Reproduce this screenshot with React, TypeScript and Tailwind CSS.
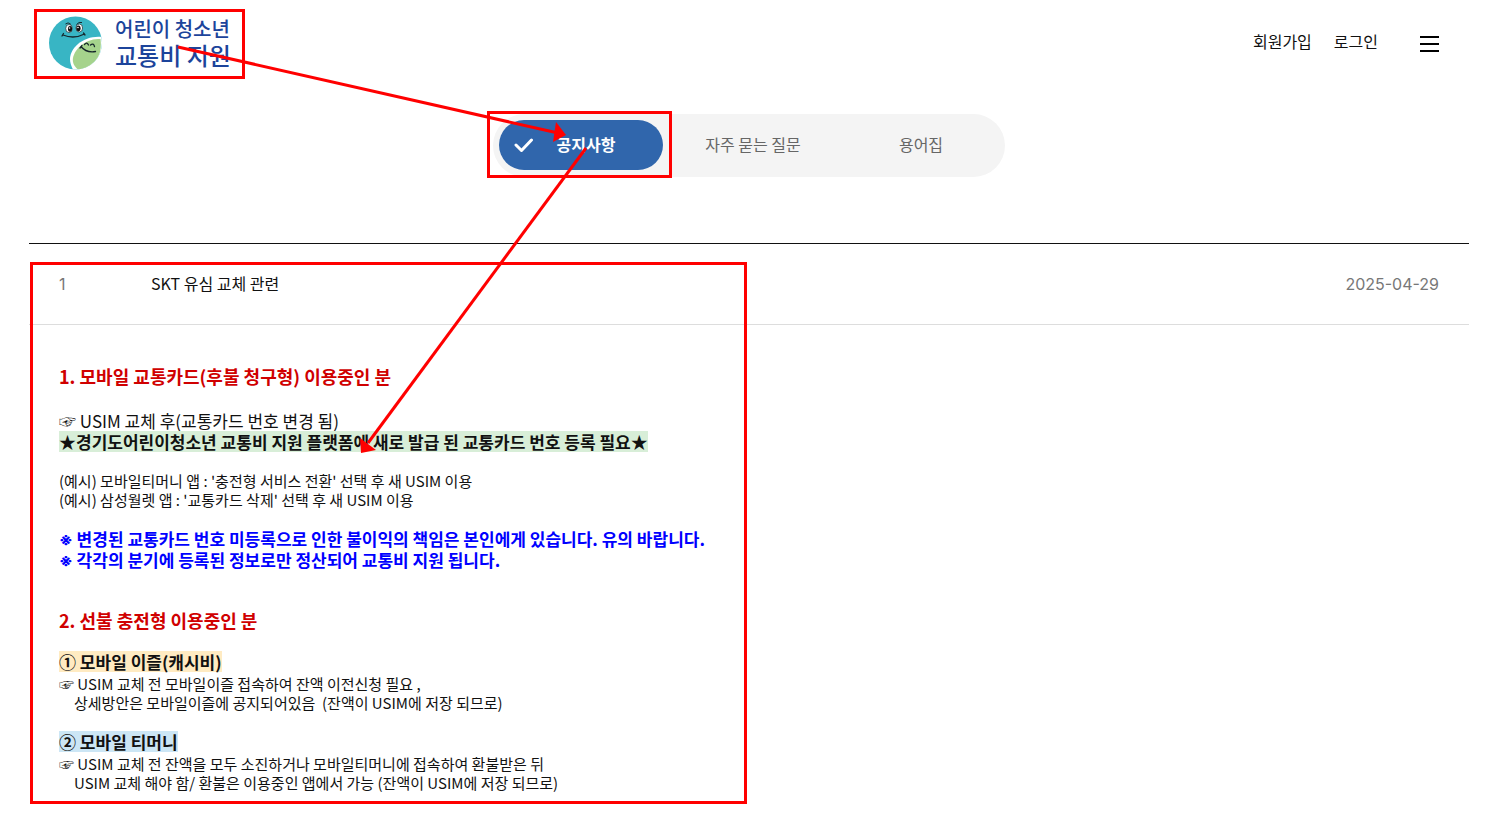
function Logo() {
  return (
    <a href="#home" className="relative flex h-[70px] w-[211px] items-center pl-[14px]">
      <svg viewBox="0 0 54 54" className="mb-[3px] h-[54px] w-[54px] shrink-0" fill="none" aria-hidden="true">
        <defs>
          <clipPath id="face">
            <circle cx="27.500" cy="27" r="26.500" />
          </clipPath>
        </defs>
        <circle cx="27.500" cy="27" r="26.500" fill="#38b5c4" />
        <g clipPath="url(#face)">
          <path d="M55 21C37 18.500 22 31 22 43C22 48 24 52 27 57L58 57L58 22Z" fill="#fff" />
          <path d="M52.500 23C38 21.500 24.800 34 24.800 44C24.800 48 27.500 52 31 54C44 53 55 42 52.500 23Z" fill="#a5d38c" />
        </g>
        <path d="M17.500 8Q20 5.500 23 8.500M28.500 8.500Q31 5.500 34 6.500" stroke="#16262b" strokeWidth="1" />
        <ellipse cx="21" cy="12.500" rx="3.300" ry="4" fill="#fff" stroke="#16262b" strokeWidth=".7" />
        <ellipse cx="31.300" cy="12" rx="3.300" ry="4" fill="#fff" stroke="#16262b" strokeWidth=".7" />
        <ellipse cx="22" cy="12.800" rx="2.100" ry="2.900" fill="#111" />
        <ellipse cx="30.500" cy="12.300" rx="2.100" ry="2.900" fill="#111" />
        <circle cx="21.500" cy="12" r=".8" fill="#fff" />
        <circle cx="30" cy="11.500" r=".8" fill="#fff" />
        <path d="M15 19Q26 23.500 36.500 18M14 20L15.500 17.500M35.500 17L37 19" stroke="#16262b" strokeWidth="1.300" strokeLinecap="round" />
        <path d="M36.500 28.500Q39 25.500 40.500 29M42.500 29Q45.500 26.500 46.500 30.500M33 30.500Q38 37 47.500 35.500M32 32L34 29.500" stroke="#16262b" strokeWidth="1.300" strokeLinecap="round" />
      </svg>
      <span className="mb-[4px] ml-[13px] flex flex-col whitespace-nowrap text-[#1c449b]">
        <span className="text-[20px] leading-[26px] font-medium">어린이 청소년</span>
        <span className="text-[24px] leading-[26px] font-medium">교통비 지원</span>
      </span>
      <span className="pointer-events-none absolute inset-0 border-3 border-[#f00]" />
    </a>
  );
}

function Tabs() {
  return (
    <nav className="mx-auto flex h-[63px] w-[512px] items-start rounded-full bg-[#f4f4f4] pt-[6px] pl-[6px] text-[16px] text-[#666]">
      <div className="relative">
        <button className="relative flex h-[50px] w-[164px] items-center justify-center rounded-full bg-[#3066ac] pb-[2px] pl-[10px] font-bold text-white">
          <svg viewBox="0 0 20 16" className="absolute top-[17px] left-[15px] h-4 w-5" fill="none" aria-hidden="true">
            <path d="M2 8L7.500 13.500L17.500 3" stroke="#fff" strokeWidth="3" strokeLinecap="round" strokeLinejoin="round" />
          </svg>
          공지사항
        </button>
        <span className="pointer-events-none absolute -top-[9px] -left-[12px] h-[67px] w-[185px] border-3 border-[#f00]" />
      </div>
      <button className="ml-2 h-[50px] w-[164px] pb-[2px] text-center">자주 묻는 질문</button>
      <button className="ml-1 h-[50px] w-[164px] pb-[2px] text-center">용어집</button>
    </nav>
  );
}

function NoticeBody() {
  return (
    <div className="pt-[39px] pl-[30px] text-[15px] leading-[19px] whitespace-nowrap text-[#111]">
      <h2 className="text-[18px] leading-6 font-bold text-[#d00000]">1. 모바일 교통카드(후불 청구형) 이용중인 분</h2>
      <div className="mt-[22px] text-[17px] leading-[21px]">
        <p>☞ USIM 교체 후(교통카드 번호 변경 됨)</p>
        <p className="flex font-bold">
          <mark className="bg-[#d8eed8] text-inherit">★경기도어린이청소년 교통비 지원 플랫폼에 새로 발급 된 교통카드 번호 등록 필요★</mark>
        </p>
      </div>
      <div className="mt-[19px]">
        <p>(예시) 모바일티머니 앱 : '충전형 서비스 전환' 선택 후 새 USIM 이용</p>
        <p>(예시) 삼성월렛 앱 : '교통카드 삭제' 선택 후 새 USIM 이용</p>
      </div>
      <div className="mt-[19px] text-[17px] leading-[21px] font-bold text-[#00f]">
        <p>
          <span className="font-['Inter',sans-serif] leading-none">※</span> 변경된 교통카드 번호 미등록으로 인한 불이익의 책임은 본인에게 있습니다. 유의 바랍니다.
        </p>
        <p>
          <span className="font-['Inter',sans-serif] leading-none">※</span> 각각의 분기에 등록된 정보로만 정산되어 교통비 지원 됩니다.
        </p>
      </div>
      <h2 className="mt-[38px] text-[18px] leading-6 font-bold text-[#d00000]">2. 선불 충전형 이용중인 분</h2>
      <h3 className="mt-[19px] flex text-[17px] leading-[21px] font-bold">
        <mark className="bg-[#ffebc2] text-inherit">① 모바일 이즐(캐시비)</mark>
      </h3>
      <div className="mt-[2px]">
        <p>☞ USIM 교체 전 모바일이즐 접속하여 잔액 이전신청 필요 ,</p>
        <p className="pl-[15px]">상세방안은 모바일이즐에 공지되어있음&nbsp; (잔액이 USIM에 저장 되므로)</p>
      </div>
      <h3 className="mt-[19px] flex text-[17px] leading-[21px] font-bold">
        <mark className="bg-[#cce6f5] text-inherit">② 모바일 티머니</mark>
      </h3>
      <div className="mt-[2px]">
        <p>☞ USIM 교체 전 잔액을 모두 소진하거나 모바일티머니에 접속하여 환불받은 뒤</p>
        <p className="pl-[15px]">USIM 교체 해야 함/ 환불은 이용중인 앱에서 가능 (잔액이 USIM에 저장 되므로)</p>
      </div>
    </div>
  );
}

function Arrows() {
  return (
    <svg className="pointer-events-none absolute top-0 left-0 h-[818px] w-[1491px]" viewBox="0 0 1491 818" aria-hidden="true">
      <g stroke="#f00" strokeWidth="3" fill="#f00">
        <path d="M178 47L558 133" />
        <path d="M586 148L368 443" />
      </g>
      <path d="M556 122L566 135L553 142Z" fill="#f00" />
      <path d="M360 438L361 453L376 450Z" fill="#f00" />
    </svg>
  );
}

export default function App() {
  return (
    <div className="relative min-h-screen overflow-x-hidden bg-white pb-[14px] font-['Noto_Sans_CJK_KR',sans-serif]">
      <header className="flex items-start justify-between pt-[9px] pr-[52px] pl-[34px]">
        <Logo />
        <div className="flex items-center pt-5 text-[16px] leading-6 text-[#111]">
          <a href="#join">회원가입</a>
          <a href="#login" className="ml-[22px]">로그인</a>
          <button aria-label="전체 메뉴" className="mt-[6px] ml-[42px] flex w-[19px] flex-col gap-[5px]">
            <span className="h-[2px] bg-black" />
            <span className="h-[2px] bg-black" />
            <span className="h-[2px] bg-black" />
          </button>
        </div>
      </header>
      <main className="pt-[35px] pr-[22px] pl-[29px]">
        <Tabs />
        <section className="relative mt-[66px] border-t border-[#111]">
          <table className="w-full table-fixed text-left text-[16px]">
            <tbody>
              <tr className="h-[80px] border-b border-[#ddd]">
                <td className="w-[122px] pl-[30px] font-['Inter',sans-serif] text-[#777]">1</td>
                <td className="pb-[2px]">
                  <a href="#notice" className="text-[#111]">SKT 유심 교체 관련</a>
                </td>
                <td className="w-40 pr-[30px] text-right font-['Inter',sans-serif] text-[#777]">2025-04-29</td>
              </tr>
            </tbody>
          </table>
          <NoticeBody />
          <span className="pointer-events-none absolute top-[18px] left-[1px] h-[542px] w-[717px] border-3 border-[#f00]" />
        </section>
      </main>
      <Arrows />
    </div>
  );
}
